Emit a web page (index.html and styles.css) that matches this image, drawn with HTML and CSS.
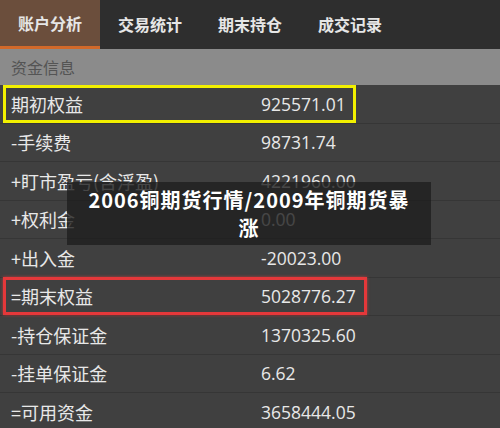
FILE: index.html
```html
<!DOCTYPE html>
<html lang="zh-CN">
<head>
<meta charset="utf-8">
<link rel="stylesheet" href="styles.css">
</head>
<body>
<div class="app">
  <nav class="tabs">
    <div class="tab active">账户分析</div>
    <div class="tab">交易统计</div>
    <div class="tab">期末持仓</div>
    <div class="tab">成交记录</div>
  </nav>
  <div class="section">资金信息</div>
  <div class="list">
    <div class="row"><div class="hl yellow"><span class="label">期初权益</span><span class="value">925571.01</span></div></div>
    <div class="row"><span class="label">-手续费</span><span class="value">98731.74</span></div>
    <div class="row"><span class="label">+盯市盈亏(含浮盈)</span><span class="value">4221960.00</span></div>
    <div class="row"><span class="label">+权利金</span><span class="value">0.00</span></div>
    <div class="row"><span class="label">+出入金</span><span class="value">-20023.00</span></div>
    <div class="row"><div class="hl red"><span class="label">=期末权益</span><span class="value">5028776.27</span></div></div>
    <div class="row"><span class="label">-持仓保证金</span><span class="value">1370325.60</span></div>
    <div class="row"><span class="label">-挂单保证金</span><span class="value">6.62</span></div>
    <div class="row"><span class="label">=可用资金</span><span class="value">3658444.05</span></div>
  </div>
  <div class="caption">2006铜期货行情/2009年铜期货暴<br>涨</div>
</div>
</body>
</html>
```
FILE: styles.css
```css
* { box-sizing: border-box; }
html, body { margin: 0; padding: 0; }
body {
  width: 500px;
  height: 428px;
  overflow: hidden;
  background: #404040;
  font-family: "Noto Sans", "Noto Sans CJK SC", sans-serif;
}
.app { position: relative; width: 500px; height: 428px; }
.tabs {
  display: flex;
  height: 49px;
  background: #2e2e2e;
}
.tab {
  width: 100px;
  display: flex;
  align-items: center;
  justify-content: center;
  color: #e6e6e6;
  font-family: "Noto Sans CJK SC", sans-serif;
  font-weight: 700;
  font-size: 16px;
  padding-bottom: 2px;
}
.tab.active {
  background: #6b4e3c;
  border-bottom: 3px solid #d2692a;
  padding-bottom: 0;
}
.section {
  height: 36px;
  background: #8b8b8b;
  color: #545454;
  font-family: "Noto Sans CJK SC", sans-serif;
  font-size: 16px;
  display: flex;
  align-items: center;
  padding-left: 11px;
}
.list { display: flex; flex-direction: column; }
.row {
  height: 38.5px;
  border-bottom: 1px solid #363636;
  display: flex;
  align-items: center;
  color: #e8e8e8;
  font-size: 18px;
  padding-left: 11px;
}
.row:has(.hl) { padding-left: 3px; }
.label {
  width: 250px;
  font-family: "Noto Sans CJK SC", sans-serif;
  font-size: 18px;
}
.value {
  font-family: "Open Sans", "Noto Sans", sans-serif;
  font-size: 17.5px;
}
.hl {
  display: flex;
  align-items: center;
  height: 38px;
  padding-left: 5px;
}
.hl.yellow {
  width: 353px;
  border: 3px solid #f2f000;
}
.hl.red {
  width: 364px;
  border: 3px solid #e5383a;
  box-shadow: 0 0 3px rgba(230, 60, 60, 0.7);
}
.caption {
  position: absolute;
  left: 67px;
  top: 182px;
  width: 364px;
  height: 63px;
  background: rgba(30, 30, 30, 0.8);
  color: #ffffff;
  font-family: "Noto Sans CJK SC", sans-serif;
  font-weight: 700;
  font-size: 20px;
  letter-spacing: 1px;
  line-height: 28px;
  text-align: center;
  padding-top: 4px;
}
```
